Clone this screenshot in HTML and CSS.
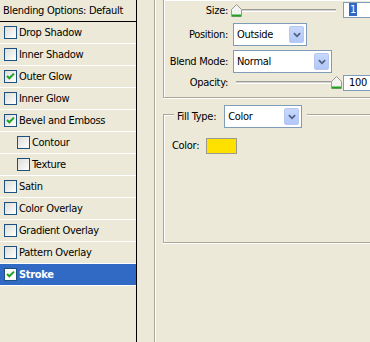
FILE: index.html
```html
<!DOCTYPE html>
<html lang="en">
<head>
    <meta charset="UTF-8">
    <title>Layer Style - Stroke</title>
    <link rel="stylesheet" href="styles.css">
</head>
<body>
    <div class="styles">
        <div class="styles-head">Blending Options: Default</div>
        <div class="row"><span class="check"></span>Drop Shadow</div>
        <div class="row"><span class="check"></span>Inner Shadow</div>
        <div class="row"><span class="check"><svg viewBox="0 0 11 11"><polyline points="2,5 4.3,7.3 9,2.6"/></svg></span>Outer Glow</div>
        <div class="row"><span class="check"></span>Inner Glow</div>
        <div class="row"><span class="check"><svg viewBox="0 0 11 11"><polyline points="2,5 4.3,7.3 9,2.6"/></svg></span>Bevel and Emboss</div>
        <div class="row row-sub"><span class="check"></span>Contour</div>
        <div class="row row-sub"><span class="check"></span>Texture</div>
        <div class="row"><span class="check"></span>Satin</div>
        <div class="row"><span class="check"></span>Color Overlay</div>
        <div class="row"><span class="check"></span>Gradient Overlay</div>
        <div class="row"><span class="check"></span>Pattern Overlay</div>
        <div class="row row-on"><span class="check"><svg viewBox="0 0 11 11"><polyline points="2,5 4.3,7.3 9,2.6"/></svg></span>Stroke</div>
    </div>

    <div class="main">
        <div class="group group-structure">
            <div class="field field-size">
                <label>Size:</label>
                <div class="slider">
                    <div class="track"></div>
                    <svg class="thumb thumb-min" viewBox="0 0 11 13"><path d="M5.5 0.5 L10.5 5.5 V12.5 H0.5 V5.5 Z"/><line x1="1" y1="11.5" x2="10" y2="11.5"/></svg>
                </div>
                <div class="num"><span class="sel">1</span></div>
            </div>
            <div class="field field-position">
                <label>Position:</label>
                <div class="combo combo-position">
                    <span>Outside</span>
                    <span class="combo-btn"><svg viewBox="0 0 9 6"><polyline points="1,1 4.5,4.5 8,1"/></svg></span>
                </div>
            </div>
            <div class="field field-blend">
                <label>Blend Mode:</label>
                <div class="combo combo-blend">
                    <span>Normal</span>
                    <span class="combo-btn"><svg viewBox="0 0 9 6"><polyline points="1,1 4.5,4.5 8,1"/></svg></span>
                </div>
            </div>
            <div class="field field-opacity">
                <label>Opacity:</label>
                <div class="slider">
                    <div class="track"></div>
                    <svg class="thumb thumb-max" viewBox="0 0 11 13"><path d="M5.5 0.5 L10.5 5.5 V12.5 H0.5 V5.5 Z"/><line x1="1" y1="11.5" x2="10" y2="11.5"/></svg>
                </div>
                <div class="num">100</div>
            </div>
        </div>

        <fieldset class="group group-fill">
            <legend>
                <span class="legend-label">Fill Type:</span>
                <div class="combo combo-fill">
                    <span>Color</span>
                    <span class="combo-btn"><svg viewBox="0 0 9 6"><polyline points="1,1 4.5,4.5 8,1"/></svg></span>
                </div>
            </legend>
            <div class="color-row">
                <span>Color:</span>
                <span class="swatch"></span>
            </div>
        </fieldset>
    </div>
</body>
</html>
```

FILE: styles.css
```css
body {
    margin: 0;
    width: 370px;
    height: 342px;
    overflow: hidden;
    display: flex;
    background-color: #ece9d8;
    font-family: "DejaVu Sans Condensed", "Liberation Sans", sans-serif;
    font-stretch: condensed;
    font-size: 11px;
    letter-spacing: -0.3px;
    color: #000;
}
.styles {
    width: 136px;
    flex: none;
    border-right: 1px solid #000;
}
.styles-head {
    height: 21px;
    line-height: 21px;
    padding-left: 3px;
    border-bottom: 1px solid #000;
    white-space: nowrap;
}
.row {
    height: 21px;
    display: flex;
    align-items: center;
    padding-left: 4px;
    border-bottom: 1px solid #fff;
    white-space: nowrap;
}
.row-sub {
    padding-left: 17px;
}
.row-on {
    background-color: #316ac5;
    color: #fff;
    font-weight: bold;
}
.check {
    width: 11px;
    height: 11px;
    margin-right: 2px;
    border: 1px solid #1c5180;
    background: linear-gradient(135deg, #dcdcd7, #fff);
    flex: none;
}
.row-on .check {
    background: #fff;
}
.check svg {
    display: block;
    width: 11px;
    height: 11px;
}
.check polyline {
    fill: none;
    stroke: #21a121;
    stroke-width: 2;
}

.main {
    flex: 1;
    min-width: 0;
    margin-left: 17px;
    padding-left: 8px;
    border-left: 1px solid #aca899;
    box-shadow: inset 1px 0 0 #fff;
}
.group {
    border: 1px solid #aca899;
    border-right: none;
    box-shadow: inset 1px 1px 0 #fff, 0 1px 0 #fff;
}
.group-structure {
    border-top: none;
    padding: 0 0 6px 1px;
}
.field {
    display: flex;
    align-items: center;
}
.field label {
    width: 63px;
    margin-right: 5px;
    text-align: right;
    white-space: nowrap;
}
.field-size {
    height: 20px;
}
.field-position {
    height: 23px;
    margin-top: 3px;
}
.field-blend {
    height: 23px;
    margin-top: 4px;
}
.field-opacity {
    height: 17px;
    margin-top: 1px;
}
.slider {
    position: relative;
    width: 108px;
    height: 13px;
    margin-left: -1px;
    flex: none;
}
.track {
    margin: 5px 4px 0;
    height: 1px;
    border-top: 1px solid #9d9c99;
    border-bottom: 1px solid #fff;
    background-color: #d6d3ce;
}
.thumb {
    position: absolute;
    top: 0;
    width: 11px;
    height: 13px;
}
.thumb-min {
    left: -1px;
}
.thumb-max {
    right: -2px;
}
.thumb path {
    fill: #f3f3ef;
    stroke: #9a9a8f;
}
.thumb line {
    stroke: #21a121;
    stroke-width: 2;
}
.num {
    flex: 1;
    margin-left: 3px;
    height: 14px;
    line-height: 14px;
    padding-left: 5px;
    background-color: #fff;
    border: 1px solid #7f9db9;
    border-right: none;
}
.sel {
    background-color: #316ac5;
    color: #fff;
    padding: 0 1px;
}
.combo {
    display: flex;
    align-items: center;
    justify-content: space-between;
    box-sizing: border-box;
    height: 23px;
    padding: 2px 2px 2px 3px;
    background-color: #fff;
    border: 1px solid #7f9db9;
}
.combo-position {
    width: 74px;
}
.combo-blend {
    width: 99px;
}
.combo-fill {
    width: 78px;
}
.combo-btn {
    width: 15px;
    height: 100%;
    border-radius: 2px;
    background: linear-gradient(#c9d8fc, #b1c7f6);
    border: 1px solid #b5c8f3;
    box-sizing: border-box;
    display: flex;
    align-items: center;
    justify-content: center;
}
.combo-btn svg {
    width: 8px;
    height: 6px;
}
.combo-btn polyline {
    fill: none;
    stroke: #4d6185;
    stroke-width: 2;
}

.group-fill {
    box-sizing: border-box;
    height: 143px;
    margin: 2px 0 0;
    padding: 0 0 0 8px;
    min-inline-size: 0;
}
.group-fill legend {
    display: flex;
    align-items: center;
    margin-left: 2px;
    padding: 5px 5px 0 3px;
    background-color: #ece9d8;
}
.legend-label {
    margin-right: 8px;
}
.color-row {
    display: flex;
    align-items: center;
    height: 17px;
    margin-top: 9px;
}
.swatch {
    width: 29px;
    height: 14px;
    margin-left: 7px;
    background-color: #ffe100;
    border: 1px solid #9c9a8e;
}
```
